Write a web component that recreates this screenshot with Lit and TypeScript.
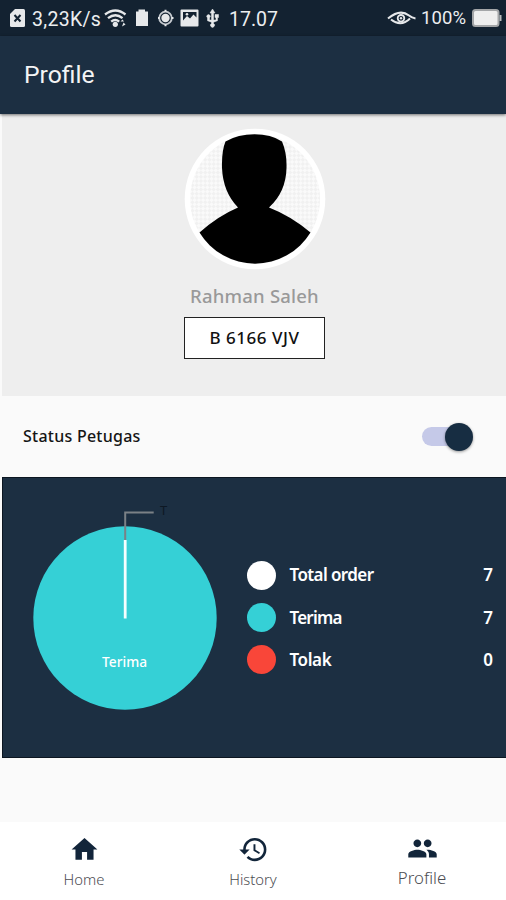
import { LitElement, html, css, svg } from "lit";
import { customElement, property, state } from "lit/decorators.js";

@customElement("status-bar")
export class StatusBar extends LitElement {
  static styles = css`
    :host { display: flex; height: 36px; box-sizing: border-box; padding: 0 4px 0 9px; align-items: center; background: #132231; color: #eceef0; font: 19.5px/36px Roboto, sans-serif; }
    svg { display: block; flex: none; fill: #e6e8ea; }
    span { padding-top: 3px; }
    .speed { width: 72px; margin-left: 6px; white-space: nowrap; letter-spacing: 0.3px; }
    .clock { margin-left: 8px; }
    .level { width: 50px; margin-left: 4px; padding-top: 0; font-size: 18.5px; letter-spacing: 0.1px; white-space: nowrap; }
    .grow { flex: 1; }
  `;
  render() {
    return html`
      <svg width="17" height="20" viewBox="0 0 17 20"><path d="M6 1h8.500q1.500 0 1.500 1.500v15q0 1.500-1.500 1.500h-12Q1 19 1 17.500V6z"/><path d="M5.500 7l6 6.500M11.500 7l-6 6.500" stroke="#132231" stroke-width="2"/></svg>
      <span class="speed">3,23K/s</span>
      <svg width="24" height="20" viewBox="0 0 24 20"><g fill="none" stroke="#e6e8ea" stroke-width="2.300"><path d="M1 6.500q10.500-8 20.500 0M4 10.200q7.500-6 14.500 0M7.200 13.700q4-3.500 8 0"/></g><circle cx="11.300" cy="16.300" r="2.600"/><path d="M16.500 13.500l2-2 1.500 2zM18 18.500l1.500-4 2 2z"/></svg>
      <svg width="30" height="20" viewBox="0 0 30 20"><path d="M8 3.500h2.500V1.500h6.500v2H20V18H8z"/></svg>
      <svg width="22" height="20" viewBox="0 0 22 20"><circle cx="7.500" cy="10" r="6.300" fill="none" stroke="#c5cacf" stroke-width="1.800"/><circle cx="7.500" cy="10" r="4.200"/><path d="M6.500 1.800h2v2h-2zM6.500 16.200h2v2h-2zM-.5 9h2v2h-2zM13.500 9h2v2h-2z"/></svg>
      <svg width="24" height="20" viewBox="0 0 24 20"><path fill-rule="evenodd" d="M1.500 1.500h16q1 0 1 1v15q0 1-1 1h-16q-1 0-1-1v-15q0-1 1-1zM3 4v8.500l4-4.500 3 2.500 3.500-4 3 3V4z"/><circle cx="7" cy="6.300" r="1.300"/></svg>
      <svg width="17" height="20" viewBox="0 0 16 20"><path d="M8 1l2.500 4H9v7h2.500V9.500h-1v-3H14v3h-1v3.200L9 14.200v1.300a2 2 0 1 1-2 0v-1.300l-4-1.500V9.700a1.700 1.700 0 1 1 2 0V12h2V5H5.500z" stroke="#e6e8ea" stroke-width=".5"/></svg>
      <span class="clock">17.07</span>
      <span class="grow"></span>
      <svg width="30" height="16" viewBox="0 0 30 16"><path d="M1 8.500Q13-1.500 22 5.500q3 2.500 6.500 3M4 9.500q10 8 19-1" fill="none" stroke="#e6e8ea" stroke-width="2"/><circle cx="14" cy="8.300" r="3.300" fill="none" stroke="#e6e8ea" stroke-width="1.800"/><circle cx="14" cy="8.300" r="1.200"/></svg>
      <span class="level">100%</span>
      <svg width="31" height="20" viewBox="0 0 31 20"><rect x="2" y="2" width="25.500" height="16" rx="2.500" fill="#eee" stroke="#a4a6a8" stroke-width="2"/><path d="M28.500 7h2v6h-2z" fill="#b9bcbe"/></svg>
    `;
  }
}

@customElement("user-avatar")
export class UserAvatar extends LitElement {
  static styles = css`:host, svg { display: block; width: 142px; height: 142px; }`;
  render() {
    return html`<svg viewBox="0 0 142 142">
      <defs><pattern id="checks" width="6" height="6" patternUnits="userSpaceOnUse" patternTransform="rotate(45)"><rect width="6" height="6" fill="#fafafa"/><path d="M0 0h3v3H0zM3 3h3v3H3z" fill="#f1f1f1"/></pattern></defs>
      <circle cx="71" cy="71" r="70.300" fill="#fff"/>
      <circle cx="71" cy="71" r="65" fill="url(#checks)"/>
      <path d="M41.500 13.500Q54 6.300 70.500 6.300T98 13.500Q103 25 102.500 40Q102 64 85 79.500Q107 88 126.500 104.500A65 65 0 0 1 15.500 104.500Q34 88 54 79.500Q39 64 38 40Q37.500 23 41.500 13.500Z"/>
    </svg>`;
  }
}

@customElement("status-switch")
export class StatusSwitch extends LitElement {
  @property({ type: Boolean }) on = true;
  static styles = css`
    :host { display: flex; align-items: center; width: 51px; height: 28px; }
    .track { display: flex; align-items: center; justify-content: flex-end; width: 49px; height: 19px; border-radius: 10px; background: #c5c9e8; }
    .off { justify-content: flex-start; }
    .knob { width: 28px; height: 28px; border-radius: 50%; margin-right: -2px; flex: none; background: #172d42; box-shadow: 0 1px 3px #0006; }
  `;
  render() {
    return html`<div class="track ${this.on ? "" : "off"}"><div class="knob"></div></div>`;
  }
}

@customElement("order-pie")
export class OrderPie extends LitElement {
  static styles = css`
    :host, svg { display: block; width: 200px; height: 220px; }
    text { font-family: "Noto Sans", sans-serif; }
    .inside { fill: #fff; font-size: 14px; font-weight: 500; }
    .outside { fill: #0d1824; font-size: 13px; }
  `;
  render() {
    return html`<svg viewBox="0 0 200 220">
      <circle cx="100" cy="118" r="91.700" fill="#35d0d6"/>
      <path d="M100.200 40v78.500" stroke="#f4ffff" stroke-width="2.800"/>
      <path d="M100.200 40V12.500h28.500" fill="none" stroke="#7b8186" stroke-width="2"/>
      <text class="outside" x="135" y="14.500">T</text>
      <text class="inside" x="99.500" y="167" text-anchor="middle" textLength="45" lengthAdjust="spacingAndGlyphs">Terima</text>
    </svg>`;
  }
}

const homeIcon = svg`<path d="M10 20v-6h4v6h5v-8h3L12 3 2 12h3v8z"/>`;
const historyIcon = svg`<path d="M13 3a9 9 0 0 0-9 9H1l3.890 3.890.070.140L9 12H6c0-3.870 3.130-7 7-7s7 3.130 7 7-3.130 7-7 7c-1.930 0-3.680-.790-4.940-2.060l-1.420 1.420A8.954 8.954 0 0 0 13 21a9 9 0 0 0 0-18zm-1 5v5l4.280 2.540.720-1.210-3.500-2.080V8H12z"/>`;
const peopleIcon = svg`<path d="M16 11c1.660 0 2.990-1.340 2.990-3S17.660 5 16 5s-3 1.340-3 3 1.340 3 3 3zm-8 0c1.660 0 2.990-1.340 2.990-3S9.660 5 8 5 5 6.340 5 8s1.340 3 3 3zm0 2c-2.330 0-7 1.170-7 3.500V19h14v-2.500c0-2.330-4.670-3.500-7-3.500zm8 0c-.290 0-.620.020-.970.050 1.160.840 1.970 1.970 1.970 3.450V19h6v-2.500c0-2.330-4.670-3.500-7-3.500z"/>`;

@customElement("app-root")
export class AppRoot extends LitElement {
  @state() private legend = [
    { name: "Total order", count: 7, kind: "total", track: "w1" },
    { name: "Terima", count: 7, kind: "accepted", track: "w2" },
    { name: "Tolak", count: 0, kind: "rejected", track: "w3" },
  ];
  static styles = css`
    :host { display: flex; flex-direction: column; height: 900px; overflow: hidden; background: #fafafa; color: #151515; font-family: "Noto Sans", sans-serif; }
    .appbar { height: 78px; flex: none; box-sizing: border-box; padding: 0 24px; background: #1c2f42; color: #f3f4f5; font: 24.700px/78px Roboto, sans-serif; box-shadow: 0 1px 3px #0008; z-index: 1; }
    .user { display: flex; flex-direction: column; align-items: center; height: 282px; flex: none; box-sizing: border-box; padding: 13.500px 0 0 2px; margin-left: 2px; background: #eee; }
    .name { margin-top: 12px; margin-left: -1px; height: 29px; color: #999; font: 500 18.500px/28px "Noto Sans", sans-serif; letter-spacing: 0.2px; }
    .plate { display: flex; align-items: center; justify-content: center; width: 141px; height: 42px; box-sizing: border-box; padding-bottom: 1px; margin-top: 6px; margin-left: -1px; border: 1px solid #222; background: #fff; color: #111; font-size: 17px; font-weight: 500; letter-spacing: 0.55px; }
    .duty { display: flex; align-items: center; justify-content: space-between; flex: none; height: 81px; box-sizing: border-box; padding: 0 33px 0 23px; font-size: 16px; font-weight: 500; }
    .duty span { padding-bottom: 2px; letter-spacing: 0.25px; }
    .stats { display: flex; flex: none; height: 281px; box-sizing: border-box; margin-left: 2px; border: solid #0c1621; border-width: 1px 0 1px 1px; background: #1c2f42; padding: 22px 13px 0 22px; }
    .legend { display: flex; flex-direction: column; flex: 1; margin: 54px 0 0 22px; }
    .row { display: flex; align-items: center; height: 42.400px; color: #fff; font-size: 17px; font-weight: 600; }
    .row span:not(.dot) { padding-bottom: 1px; }
    .dot { width: 29px; height: 29px; border-radius: 50%; margin-right: 13.500px; }
    .total { background: #fff; }
    .accepted { background: #35d0d6; }
    .rejected { background: #f94639; }
    .label { flex: 1; }
    .w1 { letter-spacing: -0.6px; } .w2 { letter-spacing: -0.8px; } .w3 { letter-spacing: -0.4px; }
    .nav { display: flex; justify-content: space-between; height: 78px; flex: none; margin-top: auto; box-sizing: border-box; padding: 11.500px 42px 0; background: #fff; color: #4c4d52; }
    .tab { display: flex; flex-direction: column; align-items: center; width: 84px; font-size: 14.800px; font-weight: 300; line-height: 22px; }
    .tab svg { width: 31px; height: 31px; fill: #12253a; margin-bottom: 3px; }
    .active { font-size: 16.800px; margin-top: -1px; }
  `;
  render() {
    return html`
      <status-bar></status-bar>
      <header class="appbar">Profile</header>
      <section class="user">
        <user-avatar></user-avatar>
        <div class="name">Rahman Saleh</div>
        <div class="plate">B 6166 VJV</div>
      </section>
      <section class="duty"><span>Status Petugas</span><status-switch></status-switch></section>
      <section class="stats">
        <order-pie></order-pie>
        <div class="legend">
          ${this.legend.map((r) => html`<div class="row"><span class="dot ${r.kind}"></span><span class="label ${r.track}">${r.name}</span><span>${r.count}</span></div>`)}
        </div>
      </section>
      <nav class="nav">
        <div class="tab"><svg viewBox="0 0 24 24">${homeIcon}</svg>Home</div>
        <div class="tab"><svg viewBox="0 0 24 24">${historyIcon}</svg>History</div>
        <div class="tab active"><svg viewBox="0 0 24 24">${peopleIcon}</svg>Profile</div>
      </nav>
    `;
  }
}
